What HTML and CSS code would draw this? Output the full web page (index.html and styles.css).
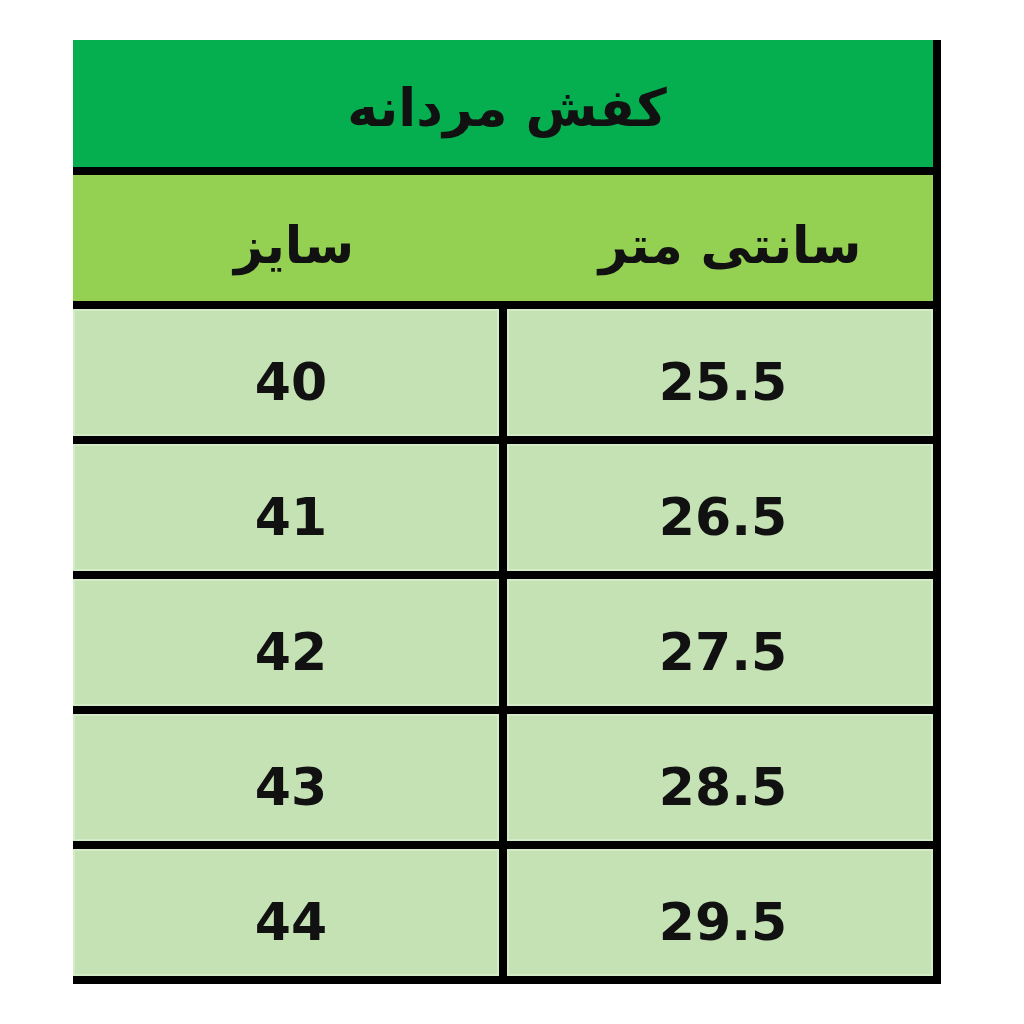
FILE: index.html
```html
<!DOCTYPE html>
<html lang="fa" dir="rtl">
<head>
<meta charset="utf-8">
<title>کفش مردانه</title>
<link rel="stylesheet" href="styles.css">
</head>
<body>
<div class="chart">
  <div class="title">کفش مردانه</div>
  <div class="row head">
    <div class="cell">سانتی متر</div>
    <div class="cell">سایز</div>
  </div>
  <div class="row body"><div class="cell num">25.5</div><div class="cell num">40</div></div>
  <div class="row body"><div class="cell num">26.5</div><div class="cell num">41</div></div>
  <div class="row body"><div class="cell num">27.5</div><div class="cell num">42</div></div>
  <div class="row body"><div class="cell num">28.5</div><div class="cell num">43</div></div>
  <div class="row body"><div class="cell num">29.5</div><div class="cell num">44</div></div>
</div>
</body>
</html>
```
FILE: styles.css
```css
html, body {
  margin: 0;
  padding: 0;
  background: #ffffff;
}
body {
  font-family: "DejaVu Sans", sans-serif;
  color: #111;
}
.chart {
  width: 860px;
  margin: 40px auto 0 73px;
  border-right: 8px solid #000;
}
.title {
  height: 135px;
  background: #05ae4e;
  border-bottom: 8px solid #000;
  box-sizing: border-box;
  display: flex;
  align-items: center;
  justify-content: center;
  font-size: 52px;
  font-weight: bold;
  padding-top: 8px;
  padding-left: 8px;
}
.row {
  display: grid;
  grid-template-columns: 1fr 1fr;
  border-bottom: 8px solid #000;
}
.row.head {
  height: 126px;
  background: #94d051;
}
.row.head .cell {
  font-size: 51px;
  padding-top: 14px;
  box-sizing: border-box;
}
.row.head .cell:first-child {
  padding-left: 24px;
}
.row.head .cell:last-child {
  padding-left: 12px;
}
.row.body {
  height: 127px;
  column-gap: 8px;
  background: #000;
}
.row.body .cell {
  background: #c5e2b4;
  box-shadow: inset 0 0 0 2px #d3ebc6;
}
.cell {
  display: flex;
  align-items: center;
  justify-content: center;
  font-weight: bold;
}
.cell.num {
  font-size: 52px;
  padding-top: 18px;
  box-sizing: border-box;
  direction: ltr;
}
.row.body .cell.num:first-child {
  padding-left: 6px;
}
.row.body .cell.num:last-child {
  padding-left: 10px;
}
```
